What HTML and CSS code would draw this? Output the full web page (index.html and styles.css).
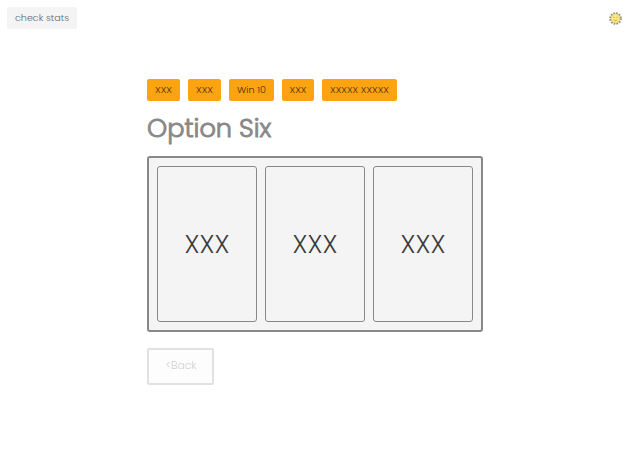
FILE: index.html
```html
<!DOCTYPE html>
<html lang="en">
<head>
<meta charset="utf-8">
<title>Option Six</title>
<link rel="stylesheet" href="styles.css">
</head>
<body>
<header class="topbar">
  <button class="stats">check stats</button>
  <svg class="sun" viewBox="0 0 13 13" width="13" height="13" aria-hidden="true">
    <circle class="rays" cx="6.5" cy="6.5" r="5.3"/>
    <circle class="face" cx="6.5" cy="6.5" r="4.7"/>
    <path class="features" d="M4.5 5.4h1M7.5 5.4h1M4.8 8q1.7 1.2 3.4 0"/>
  </svg>
</header>
<main class="content">
  <div class="tags">
    <span class="tag">XXX</span>
    <span class="tag">XXX</span>
    <span class="tag tag-win">Win 10</span>
    <span class="tag tag-short">XXX</span>
    <span class="tag tag-long">XXXXX XXXXX</span>
  </div>
  <h1 class="title">Option Six</h1>
  <div class="panel">
    <div class="card"><span>XXX</span></div>
    <div class="card"><span>XXX</span></div>
    <div class="card"><span>XXX</span></div>
  </div>
  <button class="back">&lt;Back</button>
</main>
</body>
</html>
```
FILE: styles.css
```css
* { box-sizing: border-box; }
body {
  margin: 0;
  background: #fff;
  font-family: Poppins, Inter, "Open Sans", sans-serif;
  font-weight: 300;
}
button { font-family: inherit; font-weight: inherit; margin: 0; }
.topbar {
  display: flex;
  justify-content: space-between;
  align-items: flex-start;
  height: 79px;
  padding: 7px 18px 0 7px;
}
.stats {
  width: 70px;
  height: 22px;
  padding: 0;
  border: 0;
  border-radius: 2px;
  background: #f4f4f4;
  color: #666;
  font-size: 9.6px;
  line-height: 22px;
}
.sun { margin-top: 5px; }
.rays { fill: none; stroke: #8f8b72; stroke-width: 2; stroke-dasharray: 1.6 1.175; }
.face { fill: #f9e784; stroke: #b5a766; stroke-width: .5; }
.features { fill: none; stroke: #a28a42; stroke-width: .6; }
.content { width: 336px; margin-left: 147px; }
.tags { display: flex; gap: 8px; }
.tag {
  width: 33px;
  height: 22px;
  border-radius: 2px;
  background: #fca311;
  color: #3c2a10;
  font-size: 9.6px;
  line-height: 22px;
  text-align: center;
  white-space: nowrap;
}
.tag-win { width: 45px; }
.tag-short { width: 32px; }
.tag-long { width: 75px; }
.title {
  margin: 7px 0 8px;
  height: 40px;
  color: #888;
  font-size: 25.6px;
  font-weight: 300;
  line-height: 41px;
  white-space: nowrap;
  -webkit-text-stroke: .9px #888;
}
.panel {
  display: flex;
  gap: 8px;
  height: 176px;
  padding: 8px;
  border: 2px solid #888;
  border-radius: 3px;
  background: #f4f4f4;
}
.card {
  display: flex;
  flex: 1;
  align-items: center;
  justify-content: center;
  border: 1px solid #888;
  border-radius: 3px;
  color: #3c3c3c;
  font-size: 25.6px;
  line-height: 38px;
}
.back {
  display: block;
  width: 67px;
  height: 37px;
  margin-top: 16px;
  padding: 0 0 2px 1px;
  border: 2px solid #e1e1e1;
  border-radius: 2px;
  background: #fdfdfd;
  color: #d0d0d0;
  font-size: 10.8px;
}
```
